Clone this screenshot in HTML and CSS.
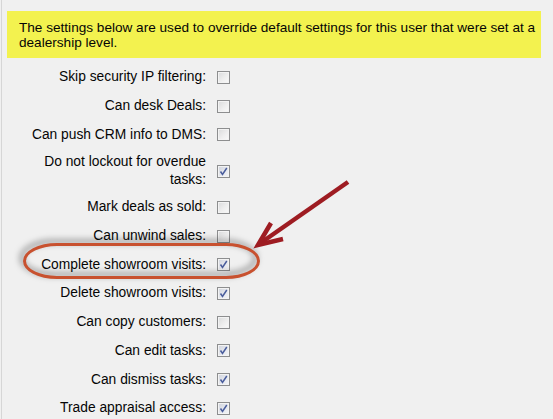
FILE: index.html
```html
<!DOCTYPE html>
<html>
<head>
<meta charset="utf-8">
<link rel="stylesheet" href="styles.css">
</head>
<body>
<div class="page">
  <div class="notice">The settings below are used to override default settings for this user that were set at a<br>dealership level.</div>
  <div class="settings">
    <div class="row"><span class="label">Skip security IP filtering:</span><span class="cb"></span></div>
    <div class="row"><span class="label">Can desk Deals:</span><span class="cb"></span></div>
    <div class="row"><span class="label">Can push CRM info to DMS:</span><span class="cb"></span></div>
    <div class="row"><span class="label">Do not lockout for overdue tasks:</span><span class="cb on"><svg viewBox="0 0 11 11"><path d="M2.5 5.5 L4.5 8.5 L8.8 2"/></svg></span></div>
    <div class="row"><span class="label">Mark deals as sold:</span><span class="cb"></span></div>
    <div class="row"><span class="label">Can unwind sales:</span><span class="cb"></span></div>
    <div class="row"><span class="label">Complete showroom visits:</span><span class="cb on"><svg viewBox="0 0 11 11"><path d="M2.5 5.5 L4.5 8.5 L8.8 2"/></svg></span></div>
    <div class="row"><span class="label">Delete showroom visits:</span><span class="cb on"><svg viewBox="0 0 11 11"><path d="M2.5 5.5 L4.5 8.5 L8.8 2"/></svg></span></div>
    <div class="row"><span class="label">Can copy customers:</span><span class="cb"></span></div>
    <div class="row"><span class="label">Can edit tasks:</span><span class="cb on"><svg viewBox="0 0 11 11"><path d="M2.5 5.5 L4.5 8.5 L8.8 2"/></svg></span></div>
    <div class="row"><span class="label">Can dismiss tasks:</span><span class="cb on"><svg viewBox="0 0 11 11"><path d="M2.5 5.5 L4.5 8.5 L8.8 2"/></svg></span></div>
    <div class="row"><span class="label">Trade appraisal access:</span><span class="cb on"><svg viewBox="0 0 11 11"><path d="M2.5 5.5 L4.5 8.5 L8.8 2"/></svg></span></div>
  </div>
  <div class="ring"></div>
  <svg class="arrow" width="553" height="419" viewBox="0 0 553 419">
    <line x1="348" y1="182" x2="262" y2="242"/>
    <polyline points="271,223 258,245 283,239"/>
  </svg>
</div>
</body>
</html>
```
FILE: styles.css
```css
html, body {
  margin: 0;
  padding: 0;
  background: #f0f0f0;
}
body {
  font-family: "Liberation Sans", Arial, sans-serif;
  font-size: 13.8px;
  color: #050505;
  overflow: hidden;
}
.page {
  position: relative;
  margin-left: 1px;
  border-left: 1px solid #d6d6d6;
  height: 419px;
  box-sizing: border-box;
  padding: 11px 0 0 5px;
}
.notice {
  width: 534px;
  box-sizing: border-box;
  background: #f3f24f;
  padding: 9px 0 8px 12px;
  font-size: 13.6px;
  line-height: 15px;
  white-space: nowrap;
}
.settings {
  margin-top: 5px;
  padding-left: 13px;
}
.row {
  display: flex;
  align-items: center;
  min-height: 28.7px;
}
.label {
  width: 186px;
  text-align: right;
  line-height: 18px;
  padding: 4px 0;
}
.cb {
  width: 13px;
  height: 13px;
  box-sizing: border-box;
  margin-left: 11px;
  border: 1px solid #8d8e8f;
  background: linear-gradient(135deg, #d9dadb 0%, #eeeeee 55%, #fafafa 100%);
  box-shadow: inset 0 0 0 1px #f3f3f3;
  display: flex;
  align-items: center;
  justify-content: center;
}
.cb.on {
  background: linear-gradient(135deg, #cfd3dc 0%, #e6e8ee 55%, #f4f5f8 100%);
}
.cb svg {
  width: 11px;
  height: 11px;
  fill: none;
  stroke: #4a5d9c;
  stroke-width: 1.5;
}
.ring {
  position: absolute;
  left: 21px;
  top: 243px;
  width: 237px;
  height: 36px;
  box-sizing: border-box;
  border: 3px solid #c8512f;
  border-radius: 34px / 18px;
  filter: drop-shadow(-3px -3px 3px rgba(0, 0, 0, 0.5));
}
.arrow {
  position: absolute;
  left: -2px;
  top: 0;
  fill: none;
  stroke: #9e1c22;
  stroke-width: 4.5;
  stroke-linejoin: miter;
}
```
